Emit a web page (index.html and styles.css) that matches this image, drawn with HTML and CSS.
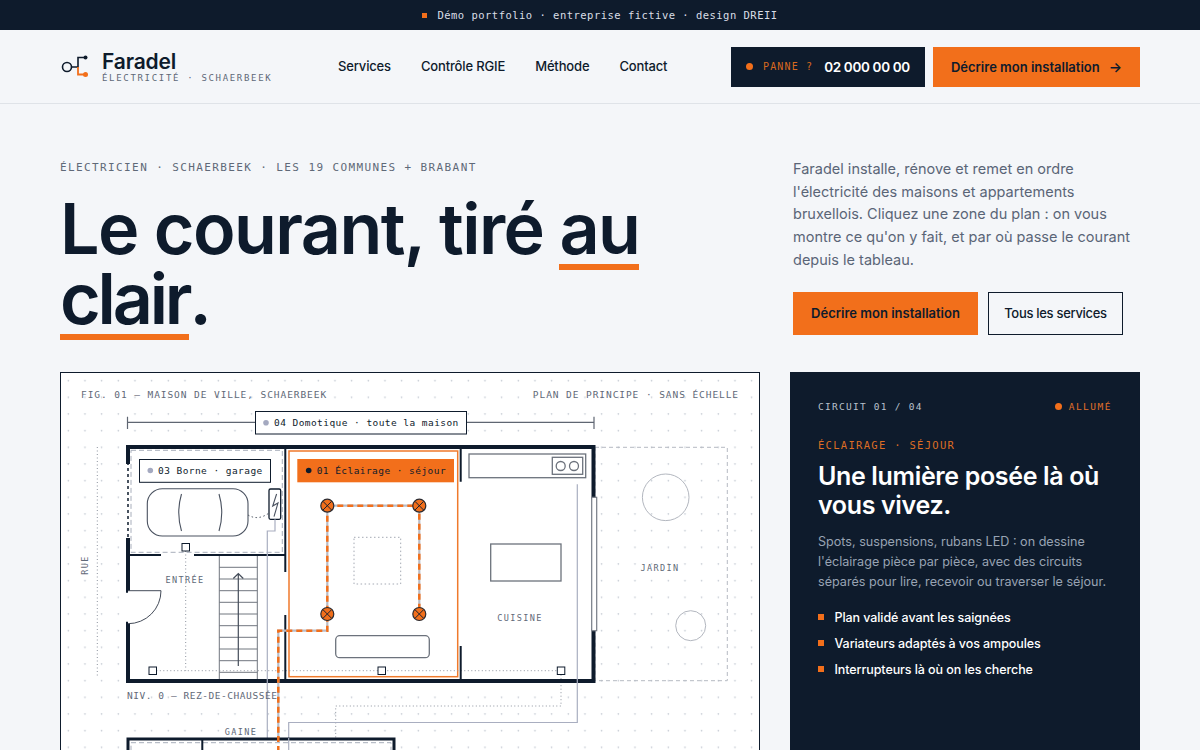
FILE: index.html
```html
<!DOCTYPE html>
<html lang="fr">
<head>
<meta charset="utf-8">
<title>Faradel Électricité</title>
<link rel="stylesheet" href="styles.css">
</head>
<body>
<div class="topbar"><i class="sq"></i><span>Démo portfolio · entreprise fictive · design DREII</span></div>
<header class="header">
  <a class="brand">
    <svg class="logo" viewBox="0 0 30 24" width="30" height="24">
      <circle class="lg-d" cx="7" cy="12" r="4.5"/>
      <path class="lg-d" d="M11.500 12H18V2.500H24"/>
      <circle class="lg-df" cx="25.500" cy="2.500" r="2"/>
      <path class="lg-o" d="M18 12V19.500H24"/>
      <circle class="lg-of" cx="25.500" cy="19.500" r="2.500"/>
    </svg>
    <span class="brand-text"><b>Faradel</b><small>ÉLECTRICITÉ · SCHAERBEEK</small></span>
  </a>
  <nav class="nav"><a>Services</a><a>Contrôle RGIE</a><a>Méthode</a><a>Contact</a></nav>
  <div class="actions">
    <a class="phone"><i class="dot"></i><span class="ph-l">PANNE ?</span><b>02 000 00 00</b></a>
    <a class="btn btn-o">Décrire mon installation <span class="arrow">→</span></a>
  </div>
</header>
<main class="main">
  <section class="hero">
    <div class="hero-l">
      <p class="eyebrow">ÉLECTRICIEN · SCHAERBEEK · LES 19 COMMUNES + BRABANT</p>
      <h1>Le courant, tiré <u>au</u><br><u class="tight">clair</u>.</h1>
    </div>
    <div class="hero-r">
      <p class="lead">Faradel installe, rénove et remet en ordre l'électricité des maisons et appartements bruxellois. Cliquez une zone du plan : on vous montre ce qu'on y fait, et par où passe le courant depuis le tableau.</p>
      <div class="cta"><a class="btn btn-o big">Décrire mon installation</a><a class="btn btn-l">Tous les services</a></div>
    </div>
  </section>
  <section class="stage">
    <div class="plan">
      <svg viewBox="61 373 698 420" width="698" height="420">
        <defs>
          <pattern id="dots" patternUnits="userSpaceOnUse" x="60" y="372" width="16.667" height="16.667">
            <circle class="griddot" cx="8.300" cy="8.700" r="0.800"/>
          </pattern>
        </defs>
        <rect x="61" y="373" width="698" height="420" fill="url(#dots)"/>

        <text class="t tl" x="81" y="398">FIG. 01 — MAISON DE VILLE, SCHAERBEEK</text>
        <text class="t tl" x="739" y="398" text-anchor="end">PLAN DE PRINCIPE · SANS ÉCHELLE</text>

        <path class="dim" d="M127.500 416.700V429M127.500 422.300H255M466 422.300H594M594 416.700V429"/>

        <!-- garden & street -->
        <rect class="dash-garden" x="595" y="447.300" width="132.300" height="233.400"/>
        <circle class="tree" cx="665.700" cy="497.300" r="23.300"/>
        <circle class="tree" cx="690.700" cy="625.700" r="15"/>
        <text class="t tr" x="660" y="571" text-anchor="middle">JARDIN</text>
        <path class="dotline" d="M97.300 447V676"/>
        <text class="t tr" transform="translate(88 565) rotate(-90)" text-anchor="middle">RUE</text>

        <!-- house -->
        <rect class="white" x="128" y="447" width="465" height="234"/>
        <rect class="room" x="289" y="451" width="168.700" height="225.700"/>
        <rect class="dash-garage" x="131" y="450.300" width="151.300" height="102"/>

        <!-- stairs -->
        <path class="stairs" d="M219.300 555V680M257.300 555V680M219.300 567.300H257.300M219.300 579H257.300M219.300 590.700H257.300M219.300 602.300H257.300M219.300 614H257.300M219.300 625.700H257.300M219.300 637.300H257.300M219.300 649H257.300M219.300 660.700H257.300M219.300 672.300H257.300"/>
        <path class="stair-arrow" d="M238.300 666V573.500M233.300 578.500L238.300 573.500L243.300 578.500"/>
        <text class="t tr" x="185" y="583" text-anchor="middle">ENTRÉE</text>

        <!-- furniture -->
        <rect class="furn" x="147.300" y="488.700" width="100.700" height="47.300" rx="15"/>
        <path class="furn" d="M181.500 494Q176 512.500 181.500 531M219 494Q224.500 512.500 219 531"/>
        <path class="wire-dot" d="M248 515Q258 521 269 513"/>
        <rect class="charger" x="269" y="489" width="11.700" height="30.300" rx="1.500"/>
        <path class="furn" d="M276.600 494L272.700 506L278 503L274 516.700"/>
        <rect class="dotbox" x="354" y="537.300" width="46.700" height="46.700"/>
        <rect class="furn2" x="335.700" y="635.700" width="93.600" height="22" rx="4"/>
        <rect class="furn2" x="469" y="454" width="116.700" height="23.700"/>
        <rect class="furn2" x="552.300" y="457.300" width="30.400" height="17"/>
        <circle class="furn2" cx="560.700" cy="466" r="4.500"/>
        <circle class="furn2" cx="574" cy="466" r="4.500"/>
        <rect class="furn2" x="490.700" y="544" width="70.300" height="37"/>
        <text class="t tr" x="520" y="621" text-anchor="middle">CUISINE</text>

        <!-- dotted network -->
        <path class="dotline" d="M185.700 551V670.700M156.300 670.700H557.300M561 674.700V706H335.700V760"/>

        <!-- walls -->
        <path class="wall" d="M128 462V447H593.500V497.300M593.500 630.700V681H128V623.700M128 590.700V540"/>
        <path class="wall-dash" d="M128 462V540"/>
        <path class="wall-in" d="M128 555H161M194 555H285.300M285.300 449V572M285.300 615V680M460.700 449V481.700M460.700 646V680"/>
        <path class="door" d="M128 590.700H161A33 33 0 0 1 128 623.700"/>
        <rect class="window" x="591.700" y="497.300" width="5" height="133.400"/>

        <!-- conduits -->
        <path class="conduit" d="M275 519.300V531H267.300V760"/>
        <path class="conduit" d="M577.300 484.300V722.500H288.700V760"/>

        <!-- circuit -->
        <path class="circ-b" d="M327.300 505.700H419.300V614M327.300 505.700V630.700H278.300V760"/>
        <path class="circ-o" d="M327.300 505.700H419.300V614M327.300 505.700V630.700H278.300V760"/>
        <g>
          <circle class="lamp" cx="327.300" cy="505.700" r="6.500"/><path class="lampx" d="M323 501.400L331.600 510M331.600 501.400L323 510"/>
          <circle class="lamp" cx="419.300" cy="505.700" r="6.500"/><path class="lampx" d="M415 501.400L423.600 510M423.600 501.400L415 510"/>
          <circle class="lamp" cx="327.300" cy="614" r="6.500"/><path class="lampx" d="M323 609.700L331.600 618.300M331.600 609.700L323 618.300"/>
          <circle class="lamp" cx="419.300" cy="614" r="6.500"/><path class="lampx" d="M415 609.700L423.600 618.300M423.600 609.700L415 618.300"/>
        </g>

        <!-- sockets -->
        <rect class="sock" x="182" y="543.500" width="7.500" height="7.500"/>
        <rect class="sock" x="149" y="667" width="7.500" height="7.500"/>
        <rect class="sock" x="378" y="667" width="7.500" height="7.500"/>
        <rect class="sock" x="557.300" y="667" width="7.500" height="7.500"/>

        <!-- labels -->
        <rect class="lab" x="255.500" y="411.500" width="211" height="22.500"/>
        <circle class="ldot-g" cx="266" cy="422.700" r="2.800"/>
        <text class="t tk" x="274" y="426.300">04 Domotique · toute la maison</text>
        <rect class="lab" x="139.500" y="459.500" width="131" height="22.800"/>
        <circle class="ldot-g" cx="150.300" cy="470.500" r="2.800"/>
        <text class="t tk" x="158" y="474.200">03 Borne · garage</text>
        <rect class="lab-o" x="297.300" y="459" width="156.700" height="23.300"/>
        <circle class="ldot-k" cx="308.700" cy="470.500" r="2.800"/>
        <text class="t tk" x="316.700" y="474.200">01 Éclairage · séjour</text>

        <text class="t tn" x="127" y="699">NIV. 0 — REZ-DE-CHAUSSÉE</text>
        <text class="t tr" x="241" y="734.500" text-anchor="middle">GAINE</text>

        <!-- lower floor -->
        <rect class="white" x="128" y="739" width="266" height="60"/>
        <rect class="dash-garage" x="131" y="742.700" width="260" height="60"/>
        <path class="wall-low" d="M128 800V739H394V800"/>
        <path class="wall-in" d="M202.300 739V800"/>
        <path class="conduit" d="M288.700 738V760"/>
        <path class="circ-o" d="M278.300 736V760"/>
      </svg>
    </div>
    <aside class="panel">
      <div class="p-top"><span>CIRCUIT 01 / 04</span><span class="on"><i class="dot"></i>ALLUMÉ</span></div>
      <p class="p-kick">ÉCLAIRAGE · SÉJOUR</p>
      <h2>Une lumière posée là où vous vivez.</h2>
      <p class="p-text">Spots, suspensions, rubans LED : on dessine l'éclairage pièce par pièce, avec des circuits séparés pour lire, recevoir ou traverser le séjour.</p>
      <ul class="p-list">
        <li>Plan validé avant les saignées</li>
        <li>Variateurs adaptés à vos ampoules</li>
        <li>Interrupteurs là où on les cherche</li>
      </ul>
    </aside>
  </section>
</main>
</body>
</html>
```
FILE: styles.css
```css
* { box-sizing: border-box; }
html, body { margin: 0; height: 750px; overflow: hidden; }
body { background: #f4f6f9; color: #0e1b2c; font-family: Inter, "Noto Sans", sans-serif; }
a { color: inherit; text-decoration: none; }

.topbar { height: 30px; background: #0e1b2c; color: #d9dee6; display: flex; align-items: center; justify-content: center; gap: 10px; font: 10.500px "DejaVu Sans Mono", monospace; letter-spacing: .48px; }
.sq { width: 5px; height: 5px; background: #f26f1b; }

.header { height: 74px; padding: 0 60px; display: flex; align-items: center; border-bottom: 1px solid #dfe3e8; }
.brand { display: flex; align-items: center; gap: 12px; width: 278px; }
.logo { flex: none; margin-top: 1px; }
.lg-d { fill: none; stroke: #0e1b2c; stroke-width: 1.600; }
.lg-df { fill: #0e1b2c; }
.lg-o { fill: none; stroke: #f26f1b; stroke-width: 1.800; }
.lg-of { fill: #f26f1b; }
.brand-text { display: flex; flex-direction: column; gap: 1px; padding-top: 2px; }
.brand-text b { font-size: 21px; line-height: 21px; font-weight: 600; letter-spacing: -.15px; }
.brand-text small { font: 9px/11px "DejaVu Sans Mono", monospace; color: #5f6978; letter-spacing: 1.680px; }
.nav { display: flex; gap: 30px; font-size: 13px; font-weight: 500; letter-spacing: -.15px; padding-bottom: 2px; }
.actions { margin-left: auto; display: flex; gap: 8px; }
.phone { width: 194px; height: 40px; background: #0e1b2c; color: #fff; display: flex; align-items: center; padding-left: 15px; }
.dot { display: inline-block; width: 7px; height: 7px; border-radius: 50%; background: #f26f1b; }
.ph-l { margin-left: 10px; font: 10px "DejaVu Sans Mono", monospace; letter-spacing: 1.150px; color: #d9691f; }
.phone b { margin-left: 11px; font-size: 13.500px; font-weight: 600; letter-spacing: -.35px; }
.btn { display: inline-flex; align-items: center; justify-content: center; font-size: 13px; font-weight: 600; }
.btn-o { background: #f26f1b; color: #0e1b2c; width: 207px; height: 40px; gap: 9px; }
.arrow { font-size: 14px; }
.big { width: 185px; height: 43px; }
.btn-l { width: 135px; height: 43px; border: 1px solid #0e1b2c; font-weight: 500; letter-spacing: -.3px; }

.main { padding: 0 60px; }
.hero { display: flex; height: 268px; }
.hero-l { width: 733px; flex: none; padding-top: 57px; }
.eyebrow { margin: 0; font: 11px/14px "DejaVu Sans Mono", monospace; letter-spacing: 1.390px; color: #5f6978; }
h1 { margin: 19px 0 0; font-size: 70px; line-height: 70px; font-weight: 600; letter-spacing: -1.600px; }
h1 u { text-decoration: none; position: relative; display: inline-block; }
h1 u::after { content: ""; position: absolute; left: 0; right: 0; top: 70px; height: 6px; background: #f26f1b; }
h1 u.tight { letter-spacing: -3.200px; }
.hero-r { flex: 1; padding-top: 54px; }
.lead { margin: 0; font-size: 14.500px; line-height: 22.700px; color: #5a6577; }
.cta { display: flex; gap: 10px; margin-top: 20px; }

.stage { display: flex; gap: 30px; }
.plan { width: 700px; height: 500px; background: #fff; border: 1px solid #0e1b2c; overflow: hidden; flex: none; }
.plan svg { display: block; }
.griddot { fill: #bcc2cc; }
.t { font-family: "DejaVu Sans Mono", monospace; }
.tl { font-size: 9.500px; letter-spacing: .93px; fill: #5f6978; }
.tn { font-size: 9.500px; letter-spacing: .55px; fill: #5f6978; }
.tr { font-size: 8.500px; letter-spacing: 1.400px; fill: #5f6978; }
.tk { font-size: 9.500px; letter-spacing: .44px; fill: #0e1b2c; }
.dim { fill: none; stroke: #5f6672; stroke-width: 1.200; }
.white { fill: #fff; }
.room { fill: #fff; stroke: #ef7a2c; stroke-width: 1.500; }
.dash-garage { fill: none; stroke: #a8aebb; stroke-width: 1; stroke-dasharray: 5 3; }
.dash-garden { fill: none; stroke: #b6bac2; stroke-width: 1; stroke-dasharray: 4 3; }
.tree { fill: none; stroke: #b3b7bf; stroke-width: 1; }
.dotline { fill: none; stroke: #8d939e; stroke-width: 1; stroke-dasharray: 1 2.500; }
.dotbox { fill: none; stroke: #a4a9b3; stroke-width: 1; stroke-dasharray: 1.500 2.500; }
.stairs { fill: none; stroke: #71767f; stroke-width: 1; }
.stair-arrow { fill: none; stroke: #444c59; stroke-width: 1.200; }
.furn { fill: none; stroke: #4a5260; stroke-width: 1.100; }
.furn2 { fill: none; stroke: #6c727c; stroke-width: 1.300; }
.wire-dot { fill: none; stroke: #444c59; stroke-width: 1; stroke-dasharray: 1.500 2.500; }
.charger { fill: #fff; stroke: #0e1b2c; stroke-width: 1.300; }
.wall { fill: none; stroke: #0e1b2c; stroke-width: 4; stroke-linecap: square; }
.wall-dash { fill: none; stroke: #0e1b2c; stroke-width: 1.500; stroke-dasharray: 3 3; }
.wall-in { fill: none; stroke: #0e1b2c; stroke-width: 2; }
.wall-low { fill: none; stroke: #0e1b2c; stroke-width: 3; }
.door { fill: #fff; stroke: #444c59; stroke-width: 1; }
.window { fill: #fff; stroke: #767c86; stroke-width: 1.200; }
.conduit { fill: none; stroke: #a9aec0; stroke-width: 1.200; }
.circ-b { fill: none; stroke: #b9bcc6; stroke-width: 2.200; }
.circ-o { fill: none; stroke: #f26f1b; stroke-width: 2.500; stroke-dasharray: 6 4; }
.lamp { fill: #f26f1b; stroke: #2a2a30; stroke-width: 1.200; }
.lampx { fill: none; stroke: #1c2230; stroke-width: 1; }
.sock { fill: #fff; stroke: #0e1b2c; stroke-width: 1; }
.lab { fill: #fff; stroke: #0e1b2c; stroke-width: 1; }
.lab-o { fill: #f26f1b; }
.ldot-g { fill: #a4a9c0; }
.ldot-k { fill: #0e1b2c; }

.panel { width: 350px; height: 500px; background: #0e1b2c; padding: 28px 28px 0; color: #fff; }
.p-top { display: flex; justify-content: space-between; font: 9.500px/13px "DejaVu Sans Mono", monospace; letter-spacing: 1.260px; color: #b9c1cd; }
.on { color: #e0702a; display: flex; align-items: center; gap: 7px; letter-spacing: 1.500px; }
.p-kick { margin: 25px 0 0; font: 10.500px/14px "DejaVu Sans Mono", monospace; letter-spacing: 1.300px; color: #dd6d24; }
h2 { margin: 10px 0 0; font-size: 25px; line-height: 29px; font-weight: 600; letter-spacing: -.35px; }
.p-text { margin: 12px 0 0; font-size: 12.600px; line-height: 20px; color: #98a3b3; }
.p-list { list-style: none; margin: 12px 0 0; padding: 0; font-size: 12.500px; font-weight: 500; letter-spacing: -.08px; }
.p-list li { display: flex; align-items: center; gap: 11px; height: 26px; }
.p-list li::before { content: ""; width: 5.500px; height: 5.500px; background: #f26f1b; }
```
